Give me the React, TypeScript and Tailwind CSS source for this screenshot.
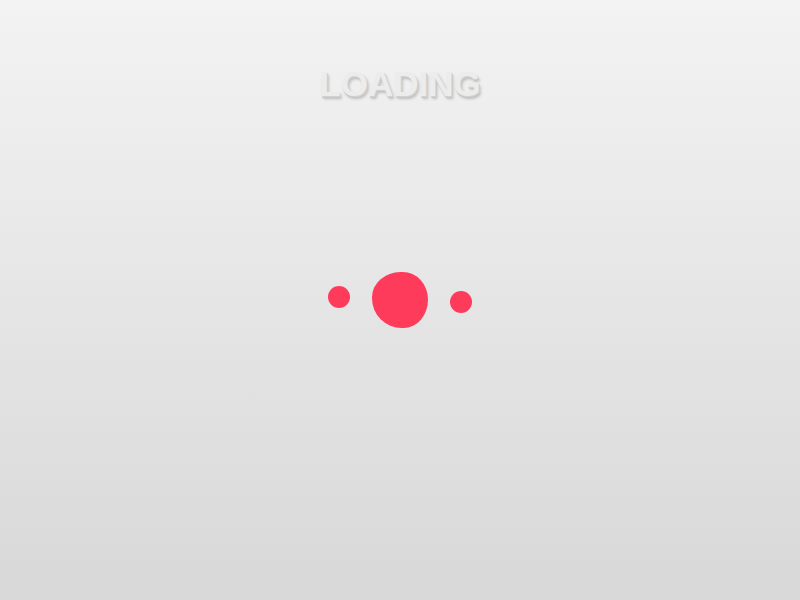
import React from 'react';

const App = () => {
  return (
    <div className="h-screen w-full overflow-hidden bg-gradient-to-b from-[#f3f3f3] to-[#d8d8d8] flex flex-col items-center font-['Liberation_Sans',Arial,sans-serif]">
      {/* Title */}
      <h1
        className="pt-[66px] text-[35px] leading-none font-bold text-[#ececec]"
        style={{
          textShadow:
            '1px 1px 0 #d2d2d2, 1px 2px 0 #c6c6c6, 2px 3px 3px rgba(0,0,0,0.22)',
        }}
      >
        LOADING
      </h1>

      {/* Dots */}
      <div className="mt-[171px] flex items-center gap-[22px]">
        <span className="block h-[22px] w-[22px] mb-[6px] rounded-full bg-[#fe3b5b]" />
        <span className="block h-[56px] w-[56px] rounded-[52%_46%_44%_54%/46%_50%_52%_54%] bg-[#fe3b5b]" />
        <span className="block h-[22px] w-[22px] mt-[4px] rounded-full bg-[#fe3b5b]" />
      </div>
    </div>
  );
};

export default App;
